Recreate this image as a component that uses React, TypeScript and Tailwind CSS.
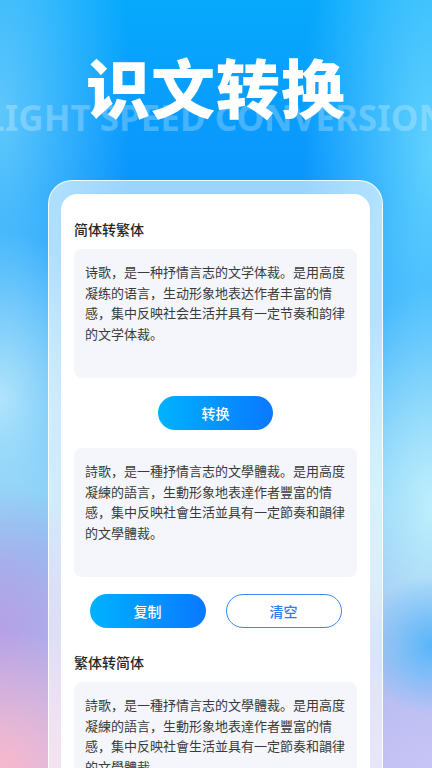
const simplified =
  "诗歌，是一种抒情言志的文学体裁。是用高度凝练的语言，生动形象地表达作者丰富的情感，集中反映社会生活并具有一定节奏和韵律的文学体裁。"
const traditional =
  "詩歌，是一種抒情言志的文學體裁。是用高度凝練的語言，生動形象地表達作者豐富的情感，集中反映社會生活並具有一定節奏和韻律的文學體裁。"

function TextBox({ text }: { text: string }) {
  return (
    <div className="h-[129px] rounded-[8px] bg-[#f5f6fb] pl-[11px] pr-[10px] pt-[13px] text-[13px] leading-[20.7px] text-[#3a3a3a]">
      {text}
    </div>
  )
}

function Label({ children }: { children: string }) {
  return <h2 className="text-[14px] font-medium leading-[20px] text-[#262626]">{children}</h2>
}

export default function App() {
  return (
    <div className="h-[768px] w-full overflow-hidden font-['Noto_Sans_CJK_SC',sans-serif] bg-[radial-gradient(ellipse_130px_140px_at_0%_100%,#f9b8cb_0%,rgba(249,184,203,0)_100%),radial-gradient(ellipse_110px_150px_at_0%_82%,#b4a0e6_0%,rgba(180,160,230,0)_100%),radial-gradient(ellipse_70px_70px_at_100%_84%,#58b6fa_0%,rgba(88,182,250,0)_100%),radial-gradient(ellipse_90px_110px_at_100%_100%,#c6c4f6_0%,rgba(198,196,246,0)_100%),radial-gradient(ellipse_110px_220px_at_100%_66%,#bdeefc_0%,rgba(189,238,252,0)_100%),radial-gradient(ellipse_110px_170px_at_0%_52%,#b0e4fb_0%,rgba(176,228,251,0)_100%),radial-gradient(ellipse_130px_380px_at_0%_15%,#5ec7fb_0%,rgba(94,199,251,0)_100%),radial-gradient(ellipse_130px_420px_at_100%_20%,#62d2fe_0%,rgba(98,210,254,0)_100%),linear-gradient(180deg,#06a9fc_0%,#0b93fd_26%,#3aa9fa_46%,#7fcaf6_64%,#a9b9ee_82%,#c4bdf2_100%)]">
      <div className="flex flex-col items-center pt-[48px]">
        <h1 className="text-[64px] font-black leading-[74px] tracking-[1px] text-white">识文转换</h1>
        <div className="-mt-[24px] flex w-full justify-center overflow-hidden">
          <span className="whitespace-nowrap font-['Noto_Sans',sans-serif] text-[35px] font-bold leading-[40px] text-white/25">
            LIGHT SPEED CONVERSION
          </span>
        </div>
      </div>

      <div className="ml-[48px] mt-[42px] w-[335px] rounded-t-[24px] border border-b-0 border-white/90 bg-white/60 px-[12px] pt-[13px]">
        <div className="rounded-t-[16px] bg-white px-[13px] pt-[25px] pb-[40px]">
          <Label>简体转繁体</Label>
          <div className="mt-[10px]">
            <TextBox text={simplified} />
          </div>
          <div className="mt-[18px] flex justify-center">
            <button className="h-[34px] w-[115px] rounded-full bg-[linear-gradient(90deg,#00b2ff,#0a78ff)] text-[14px] font-medium text-white">
              转换
            </button>
          </div>
          <div className="mt-[18px]">
            <TextBox text={traditional} />
          </div>
          <div className="mt-[17px] flex justify-center gap-[20px]">
            <button className="h-[34px] w-[116px] rounded-full bg-[linear-gradient(90deg,#00b2ff,#0a78ff)] text-[14px] font-medium text-white">
              复制
            </button>
            <button className="h-[34px] w-[116px] rounded-full border-[1.5px] border-[#3a88f0] bg-white text-[14px] font-medium text-[#2a7ef0]">
              清空
            </button>
          </div>
          <div className="mt-[24px]">
            <Label>繁体转简体</Label>
          </div>
          <div className="mt-[10px]">
            <TextBox text={traditional} />
          </div>
        </div>
      </div>
    </div>
  )
}
